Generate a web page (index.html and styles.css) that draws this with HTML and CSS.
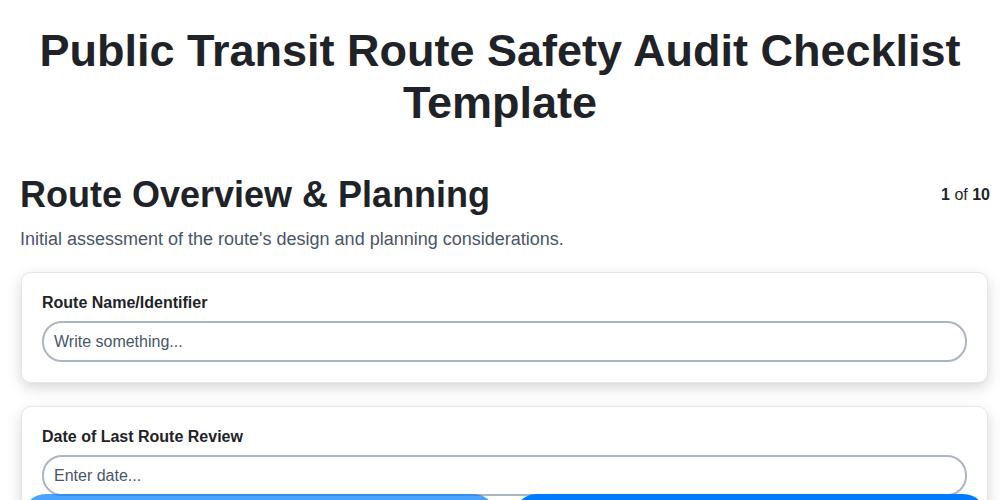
FILE: index.html
```html
<!DOCTYPE html>
<html lang="en">
<head>
    <meta charset="UTF-8">
    <meta name="viewport" content="width=device-width, initial-scale=1.0">
    <title>Public Transit Route Safety Audit Checklist Template</title>
    <link rel="stylesheet" href="styles.css">
</head>
<body>
    <h1 class="page-title">Public Transit Route Safety Audit Checklist Template</h1>

    <div class="container">
        <div class="section-header">
            <h2>Route Overview &amp; Planning</h2>
            <span class="step-count"><strong>1</strong> of <strong>10</strong></span>
        </div>
        <p class="section-desc">Initial assessment of the route's design and planning considerations.</p>

        <div class="card">
            <label for="route-name">Route Name/Identifier</label>
            <input type="text" id="route-name" placeholder="Write something...">
        </div>

        <div class="card">
            <label for="review-date">Date of Last Route Review</label>
            <input type="text" id="review-date" placeholder="Enter date...">
        </div>

        <div class="card">
            <label for="frequency">Service Frequency</label>
            <input type="text" id="frequency" placeholder="Write something...">
        </div>
    </div>

    <div class="nav-bar">
        <button class="nav-btn" disabled>Previous</button>
        <button class="nav-btn">Next</button>
    </div>
</body>
</html>
```

FILE: styles.css
```css
body {
    margin: 0;
    font-family: "Liberation Sans", Arial, sans-serif;
    background: #fff;
    color: #1f2328;
}
.page-title {
    font-size: 45px;
    line-height: 52px;
    text-align: center;
    margin: 25px 30px 45px;
}
.container {
    padding: 0 10px 80px 20px;
}
.section-header {
    display: flex;
    justify-content: space-between;
    align-items: center;
}
.section-header h2 {
    margin: 0;
    font-size: 36px;
    line-height: 41px;
}
.step-count {
    font-size: 16px;
    color: #1f2328;
    margin-top: 1px;
}
.section-desc {
    margin: 14px 0 22px;
    font-size: 18px;
    line-height: 21px;
    color: #4a5568;
}
.card {
    margin-left: 1px;
    margin-right: 2px;
    margin-bottom: 23px;
    padding: 20px;
    border: 1px solid #e5e7eb;
    border-radius: 10px;
    background: #fff;
    box-shadow: 0 5px 14px rgba(0, 0, 0, 0.16);
}
.card label {
    display: block;
    font-size: 16px;
    font-weight: bold;
    line-height: 19px;
    margin-bottom: 9px;
}
.card input {
    display: block;
    width: 100%;
    box-sizing: border-box;
    height: 41px;
    padding: 0 10px;
    border: 2px solid #adb5bf;
    border-radius: 20px;
    font-family: inherit;
    font-size: 16px;
    color: #1f2328;
    outline: none;
}
.card input::placeholder {
    color: #4a5568;
}
.nav-bar {
    position: fixed;
    left: 22px;
    right: 13px;
    bottom: -58px;
    display: flex;
    gap: 16px;
}
.nav-btn {
    flex: 1;
    height: 64px;
    padding: 24px 0 0;
    border: none;
    border-radius: 24px;
    background: #007bff;
    color: #fff;
    font-family: inherit;
    font-size: 16px;
    font-weight: bold;
}
.nav-btn:disabled {
    opacity: 0.7;
}
```
